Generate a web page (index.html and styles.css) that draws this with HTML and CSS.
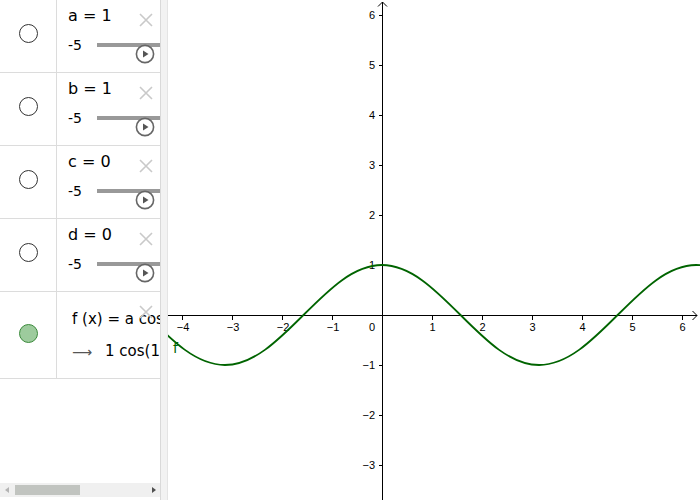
FILE: index.html
```html
<!DOCTYPE html>
<html>
<head>
<meta charset="utf-8">
<link rel="stylesheet" href="styles.css">
</head>
<body>
<div class="app">
  <div class="algebra">
    <div class="row">
      <div class="marble-col"><span class="marble"></span></div>
      <div class="content">
        <div class="def">a = 1</div>
        <div class="slider"><span class="min">-5</span><span class="track"></span></div>
        <svg class="close" viewBox="0 0 16 16"><path d="M2 2L14 14M14 2L2 14"/></svg>
        <svg class="play" viewBox="0 0 20 20"><circle cx="10" cy="10" r="8.6"/><path d="M8 6.5L13.5 10L8 13.5Z"/></svg>
      </div>
    </div>
    <div class="row">
      <div class="marble-col"><span class="marble"></span></div>
      <div class="content">
        <div class="def">b = 1</div>
        <div class="slider"><span class="min">-5</span><span class="track"></span></div>
        <svg class="close" viewBox="0 0 16 16"><path d="M2 2L14 14M14 2L2 14"/></svg>
        <svg class="play" viewBox="0 0 20 20"><circle cx="10" cy="10" r="8.6"/><path d="M8 6.5L13.5 10L8 13.5Z"/></svg>
      </div>
    </div>
    <div class="row">
      <div class="marble-col"><span class="marble"></span></div>
      <div class="content">
        <div class="def">c = 0</div>
        <div class="slider"><span class="min">-5</span><span class="track"></span></div>
        <svg class="close" viewBox="0 0 16 16"><path d="M2 2L14 14M14 2L2 14"/></svg>
        <svg class="play" viewBox="0 0 20 20"><circle cx="10" cy="10" r="8.6"/><path d="M8 6.5L13.5 10L8 13.5Z"/></svg>
      </div>
    </div>
    <div class="row">
      <div class="marble-col"><span class="marble"></span></div>
      <div class="content">
        <div class="def">d = 0</div>
        <div class="slider"><span class="min">-5</span><span class="track"></span></div>
        <svg class="close" viewBox="0 0 16 16"><path d="M2 2L14 14M14 2L2 14"/></svg>
        <svg class="play" viewBox="0 0 20 20"><circle cx="10" cy="10" r="8.6"/><path d="M8 6.5L13.5 10L8 13.5Z"/></svg>
      </div>
    </div>
    <div class="row row-tall">
      <div class="marble-col marble-col-tall"><span class="marble marble-on"></span></div>
      <div class="content content-func">
        <div class="func">f (x) = a cos</div>
        <div class="func func-out"><span class="arrow">⟶</span>1 cos(1</div>
        <svg class="close" viewBox="0 0 16 16"><path d="M2 2L14 14M14 2L2 14"/></svg>
      </div>
    </div>
    <div class="spacer"></div>
    <div class="hscroll">
      <span class="arr arr-left"></span>
      <span class="thumb"></span>
      <span class="spacer"></span>
      <span class="arr arr-right"></span>
    </div>
  </div>
  <div class="splitter"></div>
  <div class="graphics">
    <svg class="plot" width="532" height="500" viewBox="0 0 532 500">
      <g class="axes">
        <line x1="0" y1="315.5" x2="529" y2="315.5"/>
        <line x1="214.5" y1="2" x2="214.5" y2="500"/>
        <polyline points="524.5,311 529,315.5 524.5,320"/>
        <polyline points="210,6.5 214.5,2 219,6.5"/>
        <path d="M14.5 315V320M64.5 315V320M114.5 315V320M164.5 315V320M264.5 315V320M314.5 315V320M364.5 315V320M414.5 315V320M464.5 315V320M514.5 315V320"/>
        <path d="M211 15.5H214M211 65.5H214M211 115.5H214M211 165.5H214M211 215.5H214M211 265.5H214M211 365.5H214M211 415.5H214M211 465.5H214"/>
      </g>
      <g class="xlabels">
        <text x="15">−4</text>
        <text x="65">−3</text>
        <text x="115">−2</text>
        <text x="165">−1</text>
        <text x="264.5">1</text>
        <text x="314.5">2</text>
        <text x="364.5">3</text>
        <text x="414.5">4</text>
        <text x="464.5">5</text>
        <text x="514.5">6</text>
      </g>
      <g class="ylabels">
        <text y="19">6</text>
        <text y="69">5</text>
        <text y="119">4</text>
        <text y="169">3</text>
        <text y="219">2</text>
        <text y="269">1</text>
        <text y="369">−1</text>
        <text y="419">−2</text>
        <text y="469">−3</text>
      </g>
      <text class="zero" x="204" y="331">0</text>
      <path class="curve" d="M-21.62 315 C3.99 340.62 28.50 365 56.92 365 C85.35 365 109.85 340.62 135.46 315 C161.08 289.39 185.58 265 214 265 C242.43 265 266.93 289.39 292.54 315 C318.16 340.62 342.66 365 371.08 365 C399.51 365 424.01 340.62 449.62 315 C475.24 289.39 499.74 265 528.16 265 C556.59 265 581.09 289.39 606.70 315"/>
      <text class="flabel" x="5" y="353">f</text>
    </svg>
  </div>
</div>
</body>
</html>
```

FILE: styles.css
```css
html, body {
  margin: 0;
  padding: 0;
  background: #fff;
}
body {
  font-family: "DejaVu Sans", sans-serif;
  color: #000;
}
.app {
  display: flex;
  width: 700px;
  height: 500px;
  overflow: hidden;
}
.algebra {
  width: 160px;
  flex: none;
  border-right: 1px solid #d9d9d9;
  display: flex;
  flex-direction: column;
  overflow: hidden;
}
.splitter {
  width: 6px;
  flex: none;
  background: #f2f2f2;
  border-right: 1px solid #e4e4e4;
}
.graphics {
  flex: 1;
  overflow: hidden;
}
.row {
  display: flex;
  height: 72px;
  border-bottom: 1px solid #dcdcdc;
  flex: none;
  overflow: hidden;
}
.row-tall {
  height: 86px;
}
.marble-col {
  width: 57px;
  flex: none;
  box-sizing: border-box;
  border-right: 1px solid #dcdcdc;
  display: flex;
  justify-content: center;
  align-items: flex-start;
  padding-top: 24px;
}
.marble-col-tall {
  padding-top: 32px;
}
.marble {
  display: block;
  width: 19px;
  height: 19px;
  box-sizing: border-box;
  border: 1px solid #333;
  border-radius: 50%;
  background: #fff;
}
.marble-on {
  background: #9dcb9d;
  border-color: #3b8a3b;
}
.content {
  position: relative;
  flex: 1;
  min-width: 0;
  padding: 6px 0 0 11px;
  overflow: hidden;
}
.def {
  font-size: 16px;
  line-height: 20px;
  white-space: nowrap;
}
.slider {
  display: flex;
  align-items: center;
  height: 18px;
  margin-top: 10px;
}
.min {
  font-size: 14px;
  line-height: 18px;
  white-space: nowrap;
}
.track {
  flex: 1;
  height: 4px;
  margin-left: 15px;
  background: #999;
}
.close {
  position: absolute;
  left: 81px;
  top: 12px;
  width: 16px;
  height: 16px;
}
.close path {
  stroke: #c9c9c9;
  stroke-width: 1.6;
  fill: none;
}
.play {
  position: absolute;
  left: 78px;
  top: 44px;
  width: 20px;
  height: 20px;
}
.play circle {
  fill: #fff;
  stroke: #666;
  stroke-width: 1.6;
}
.play path {
  fill: #555;
}
.content-func {
  padding: 17px 0 0 15px;
}
.func {
  font-size: 15px;
  line-height: 20px;
  white-space: nowrap;
}
.func-out {
  margin-top: 12px;
}
.arrow {
  display: inline-block;
  color: #555;
  font-size: 14px;
  width: 17px;
  margin-right: 16px;
  position: relative;
  top: 1px;
}
.spacer {
  flex: 1;
}
.hscroll {
  flex: none;
  height: 14px;
  margin-bottom: 3px;
  background: #f0f0f0;
  display: flex;
  align-items: center;
}
.arr {
  width: 0;
  height: 0;
  border-top: 3.5px solid transparent;
  border-bottom: 3.5px solid transparent;
}
.arr-left {
  margin-left: 5px;
  border-right: 4px solid #b4b4b4;
}
.thumb {
  width: 65px;
  height: 10px;
  margin-left: 6px;
  background: #c1c4c0;
}
.arr-right {
  margin-right: 4px;
  border-left: 4px solid #505050;
}
.plot {
  display: block;
}
.axes line,
.axes polyline,
.axes path {
  stroke: #000;
  stroke-width: 1;
  fill: none;
}
.xlabels text {
  font-family: "Liberation Sans", Arial, sans-serif;
  font-size: 11px;
  text-anchor: middle;
  fill: #000;
  transform: translateY(331px);
}
.ylabels text {
  font-family: "Liberation Sans", Arial, sans-serif;
  font-size: 11px;
  text-anchor: end;
  fill: #000;
  transform: translateX(207px);
}
.zero {
  font-family: "Liberation Sans", Arial, sans-serif;
  font-size: 11px;
  text-anchor: middle;
  fill: #000;
}
.curve {
  fill: none;
  stroke: #006400;
  stroke-width: 1.8;
}
.flabel {
  font-family: "DejaVu Sans", sans-serif;
  font-size: 14px;
  fill: #006400;
}
```
